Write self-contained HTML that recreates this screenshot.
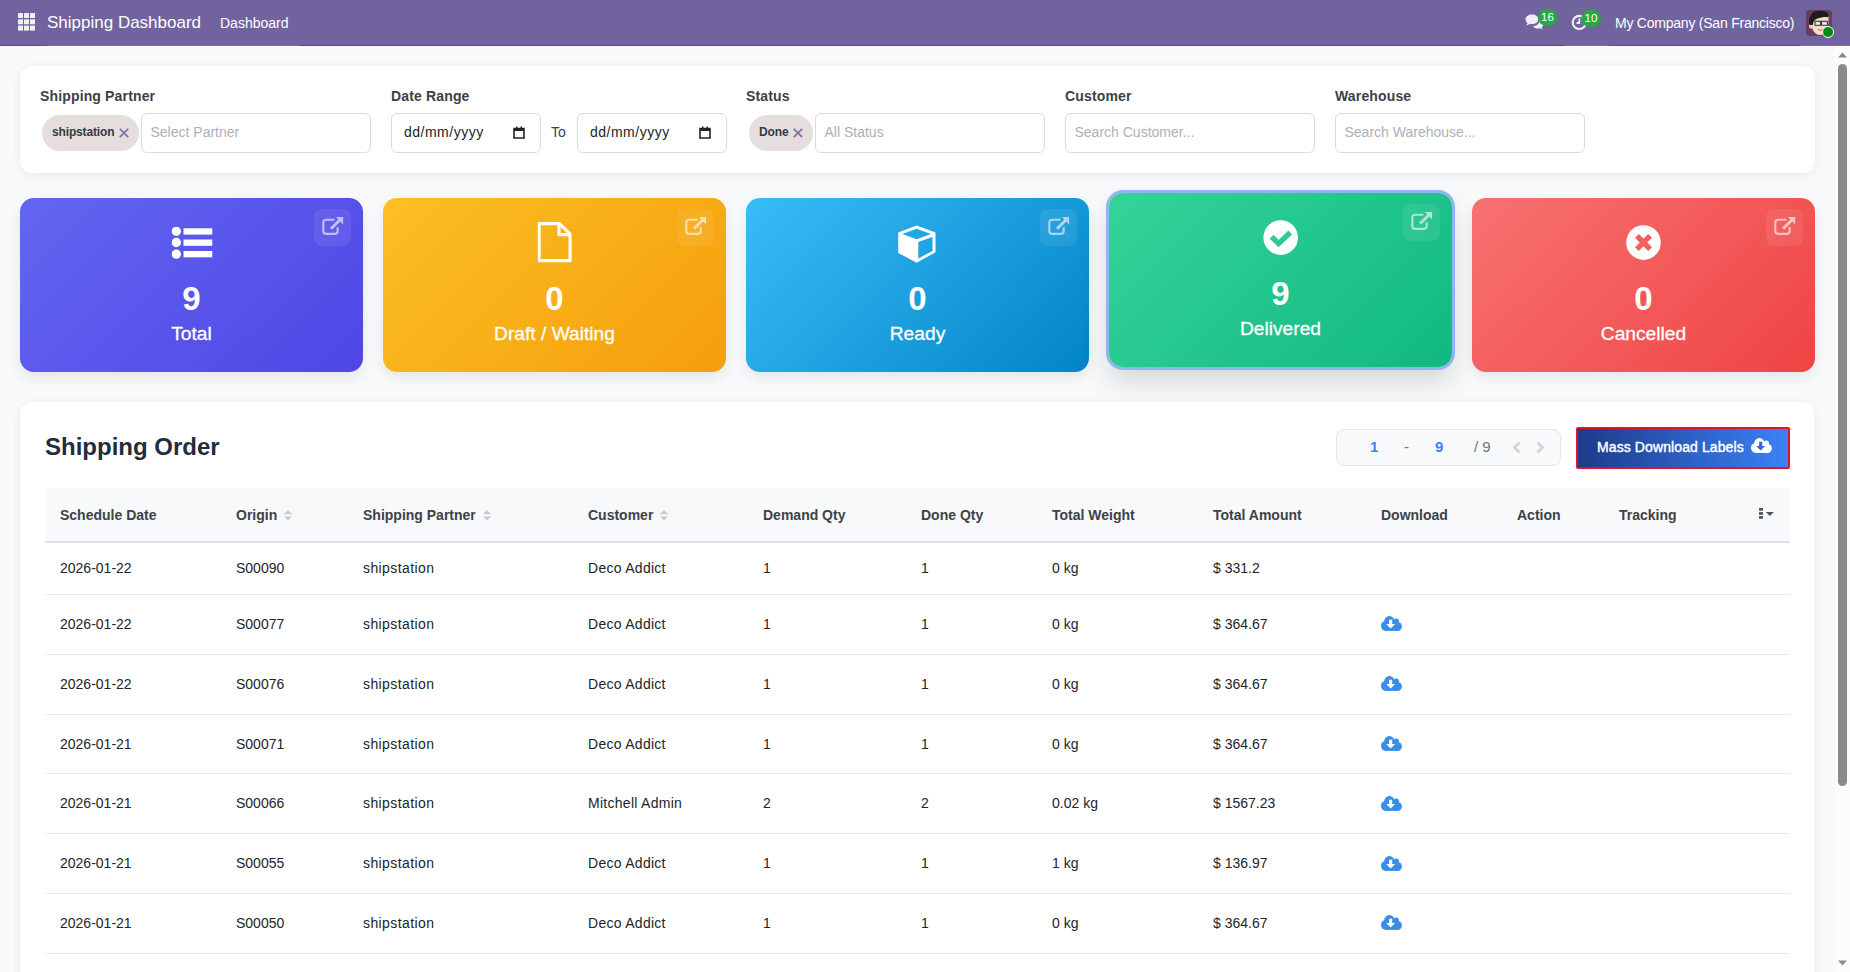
<!DOCTYPE html>
<html><head><meta charset="utf-8">
<style>
*{box-sizing:border-box;margin:0;padding:0}
html,body{width:1850px;height:972px;overflow:hidden;font-family:"Liberation Sans",sans-serif;background:#f8f9fa;color:#212529}
.nav{position:absolute;left:0;top:0;width:1850px;height:46px;background:#71639e;border-bottom:1px solid #5b4f82;color:#fff}
.nav .apps{position:absolute;left:18px;top:14px;width:17px;height:17px}
.nav .brand{position:absolute;left:47px;top:13px;font-size:17px;color:#fff;white-space:nowrap}
.nav .menu{position:absolute;left:220px;top:15px;font-size:14px;color:#fff;white-space:nowrap}
.nav .company{position:absolute;left:1615px;top:15px;font-size:14px;letter-spacing:-0.23px;color:#fff;white-space:nowrap}
.content{position:absolute;left:0;top:46px;width:1850px;height:926px;overflow:hidden;background:#f8f9fa}
.inner{position:relative;height:1150px}
.card{position:absolute;background:#fff;border-radius:12px;box-shadow:0 2px 10px rgba(0,0,0,0.07)}
.flabel{position:absolute;font-size:14px;font-weight:bold;color:#3b3f46;letter-spacing:0.15px;white-space:nowrap}
.inp{position:absolute;height:40px;border:1px solid #d6dce3;border-radius:6px;background:#fff;font-size:14px;color:#aab1ba;padding:0 9px 0 8.5px;line-height:37px;white-space:nowrap}
.pill{position:absolute;height:36px;border-radius:18px;background:#e5dedd;font-size:12px;font-weight:bold;color:#343a40;line-height:36px;padding-left:10px;white-space:nowrap}
.stat{position:absolute;top:152px;width:343px;height:174px;border-radius:14px;color:#fff;text-align:center;box-shadow:0 6px 14px rgba(0,0,0,0.08)}
.stat .num{position:absolute;left:0;right:0;top:81.5px;font-size:33px;font-weight:bold;line-height:38px}
.stat .lbl{position:absolute;left:0;right:0;top:123.5px;font-size:19.2px;line-height:24px;-webkit-text-stroke:0.3px #fff}
.stat .ext{position:absolute;right:12px;top:11px;width:37px;height:37px;border-radius:8px;background:rgba(255,255,255,0.08)}
.stat .ico{position:absolute;left:50%;top:24px;transform:translateX(-50%)}
table{position:absolute;left:45px;top:442px;width:1745px;border-collapse:collapse;font-size:14px}
th{background:#f8f9fa;height:54px;text-align:left;font-weight:bold;color:#3d4248;border-bottom:2px solid #dee2e6;padding:0 0 0 15px;white-space:nowrap}
td{height:59.8px;padding:0 0 0 15px;border-bottom:1px solid #e9ecef;color:#212529;white-space:nowrap}
.title{position:absolute;left:45px;top:387px;font-size:24px;font-weight:bold;color:#1f2d3d;white-space:nowrap}
.pager{position:absolute;left:1336px;top:383px;width:225px;height:37px;background:#f8f9fa;border:1px solid #e5e7eb;border-radius:8px;font-size:15px;color:#6c757d}
.pager span{position:absolute;top:8px;white-space:nowrap}
.pager .b{color:#3b82f6;font-weight:bold}
.mdl{position:absolute;left:1576px;top:381px;width:214px;height:42px;border:2px solid #e3122c;background:linear-gradient(90deg,#1e3a8a,#3b82f6);border-radius:2px;color:#fff;font-size:14px;font-weight:normal;-webkit-text-stroke:0.4px #fff;letter-spacing:0.1px;padding-left:19px;line-height:37px;white-space:nowrap}
.sort{vertical-align:-1px;margin-left:4px;position:relative;left:-1px}
td:nth-child(3){letter-spacing:0.4px}
td:nth-child(4){letter-spacing:0.28px}
td.dl svg{vertical-align:middle;position:relative;top:-1px}
tr.short td{height:52.4px}
tbody tr:not(.short) td{height:59.85px;padding-bottom:1px}
th.opt{padding-left:14px}
th.opt svg{vertical-align:middle;position:relative;top:-2px}
.inp.date{color:#212529;padding-left:12px;letter-spacing:0.5px;line-height:36px}
.inp.date .cal{position:absolute;right:15px;top:12px}
.pill .t{letter-spacing:-0.15px;position:relative;top:-1px}
.pill .x{position:absolute;right:10px;top:12.5px}
.sb{position:absolute;left:1835px;top:46px;width:15px;height:926px;background:#fcfcfc}
.sb .thumb{position:absolute;left:3px;top:18px;width:9px;height:722px;border-radius:5px;background:#8a8a8a}
.nav .ic{position:absolute}
.badge{position:absolute;height:17px;min-width:19px;border-radius:9px;background:#28a745;color:#fff;font-size:11.5px;font-weight:normal;line-height:17px;text-align:center;padding:0 3px}
</style></head><body>
<div class="nav">
  <div style="position:absolute;left:47px;top:45px;width:252px;height:1px;background:#7a6ca6"></div>
  <div style="position:absolute;left:1565px;top:45px;width:44px;height:1px;background:#7a6ca6"></div>
  <div style="position:absolute;left:1800px;top:45px;width:50px;height:1px;background:#7a6ca6"></div>
  <div class="brand">Shipping Dashboard</div>
  <div class="menu">Dashboard</div>
  <div class="company">My Company (San Francisco)</div>
  <svg class="ic" style="left:18px;top:13px" width="17" height="18" viewBox="0 0 17 18"><g fill="#f1eff6"><rect x="0" y="0" width="5" height="5"/><rect x="6" y="0" width="5" height="5"/><rect x="12" y="0" width="5" height="5"/><rect x="0" y="6.3" width="5" height="5"/><rect x="6" y="6.3" width="5" height="5"/><rect x="12" y="6.3" width="5" height="5"/><rect x="0" y="12.6" width="5" height="5"/><rect x="6" y="12.6" width="5" height="5"/><rect x="12" y="12.6" width="5" height="5"/></g></svg>
  <svg class="ic" style="left:1525px;top:14px" width="19" height="16" viewBox="0 0 19 16"><path fill="#f1eff6" d="M7,0.5 C10.6,0.5 13.3,2.6 13.3,5.3 C13.3,8 10.6,10.1 7,10.1 C6.3,10.1 5.6,10 5,9.9 L1.3,11.6 L2.5,9 C1.2,8.1 0.5,6.8 0.5,5.3 C0.5,2.6 3.4,0.5 7,0.5 Z M14.5,6.2 C16.8,6.9 18.3,8.5 18.3,10.4 C18.3,11.6 17.7,12.6 16.7,13.4 L17.7,15.6 L14.6,14.3 C14.1,14.4 13.6,14.5 13,14.5 C10.8,14.5 9,13.6 8.1,12.2 C11.6,12 14.5,9.6 14.5,6.5 Z"/></svg>
  <div class="badge" style="left:1538px;top:9px">16</div>
  <svg class="ic" style="left:1571px;top:14px" width="17" height="17" viewBox="0 0 17 17"><circle cx="8.3" cy="8.4" r="6.6" fill="none" stroke="#f1eff6" stroke-width="2.2"/><path d="M8.3,4.5 V9 H5.5" fill="none" stroke="#f1eff6" stroke-width="1.8"/></svg>
  <div class="badge" style="left:1581px;top:10px;min-width:20px">10</div>
  <div class="avatar" style="position:absolute;left:1806px;top:10px;width:26px;height:26px;border-radius:4px;background:#6a3b5c;overflow:hidden">
    <svg width="26" height="26" viewBox="0 0 26 26"><rect width="26" height="26" fill="#6a3d5e"/><path d="M5,10 C5,19 8.5,25 14,25 C19.5,25 22.5,19 22.5,11 L22.5,7 L6,7 Z" fill="#f6dbc6"/><ellipse cx="5" cy="16" rx="1.9" ry="2.8" fill="#efcdb4"/><path d="M3.3,15 C2.3,6 6,1.2 12,0.8 C17.5,0.4 21.5,1.6 22.5,4.2 L21.8,7.2 C18,6.8 14.5,7.6 11.5,8.6 C8.5,9.6 7.2,11.5 6.8,15 Z" fill="#1d1d1d"/><rect x="9" y="11.3" width="5.6" height="4" fill="#e6e6e6" stroke="#2e2e2e" stroke-width="1"/><rect x="15.6" y="11.3" width="5.8" height="4" fill="#e6e6e6" stroke="#2e2e2e" stroke-width="1"/><path d="M12,19.5 Q14.5,21 17,19.5" fill="none" stroke="#9b6b6b" stroke-width="0.9"/></svg>
  </div>
  <div style="position:absolute;left:1822px;top:26px;width:12px;height:12px;border-radius:50%;background:#008b14;border:1px solid #fff"></div>
</div>
<div class="content"><div class="inner">
  <div class="card" style="left:20px;top:20px;width:1795px;height:107px"></div>
  <div class="flabel" style="left:40px;top:42px">Shipping Partner</div>
  <div class="flabel" style="left:391px;top:42px">Date Range</div>
  <div class="flabel" style="left:746px;top:42px">Status</div>
  <div class="flabel" style="left:1065px;top:42px">Customer</div>
  <div class="flabel" style="left:1335px;top:42px">Warehouse</div>
  <div class="pill" style="left:42px;top:69px;width:97px"><span class="t">shipstation</span><svg class="x" width="10" height="10" viewBox="0 0 10 10"><path d="M0.8,0.8 L9.2,9.2 M9.2,0.8 L0.8,9.2" stroke="#7f70a9" stroke-width="1.7"/></svg></div>
  <div class="inp" style="left:141px;top:67px;width:230px">Select Partner</div>
  <div class="inp date" style="left:391px;top:67px;width:150px">dd/mm/yyyy<svg class="cal" width="12" height="13" viewBox="0 0 12 13"><path d="M1,2.5 H11 V12 H1 Z" fill="none" stroke="#212529" stroke-width="1.6"/><rect x="1" y="2" width="10" height="3" fill="#212529"/><rect x="3" y="0.5" width="1.5" height="2" fill="#212529"/><rect x="7.5" y="0.5" width="1.5" height="2" fill="#212529"/></svg></div>
  <div class="to" style="position:absolute;left:551px;top:78px;font-size:14px;color:#374151">To</div>
  <div class="inp date" style="left:577px;top:67px;width:150px">dd/mm/yyyy<svg class="cal" width="12" height="13" viewBox="0 0 12 13"><path d="M1,2.5 H11 V12 H1 Z" fill="none" stroke="#212529" stroke-width="1.6"/><rect x="1" y="2" width="10" height="3" fill="#212529"/><rect x="3" y="0.5" width="1.5" height="2" fill="#212529"/><rect x="7.5" y="0.5" width="1.5" height="2" fill="#212529"/></svg></div>
  <div class="pill" style="left:749px;top:69px;width:64px"><span class="t">Done</span><svg class="x" width="10" height="10" viewBox="0 0 10 10"><path d="M0.8,0.8 L9.2,9.2 M9.2,0.8 L0.8,9.2" stroke="#7f70a9" stroke-width="1.7"/></svg></div>
  <div class="inp" style="left:815px;top:67px;width:230px">All Status</div>
  <div class="inp" style="left:1065px;top:67px;width:250px">Search Customer...</div>
  <div class="inp" style="left:1335px;top:67px;width:250px">Search Warehouse...</div>
  <div class="stat" style="left:20px;top:152px;background:linear-gradient(135deg,#6366f1,#4f46e5);"><svg class="ico" style="top:29px" width="41" height="32" viewBox="0 0 41 32"><circle cx="4.8" cy="4.3" r="4.7" fill="#fff"/><circle cx="4.8" cy="15.5" r="4.7" fill="#fff"/><circle cx="4.8" cy="27.1" r="4.7" fill="#fff"/><rect x="12" y="1.3" width="29" height="6.3" fill="#fff"/><rect x="12" y="12.5" width="29" height="6.3" fill="#fff"/><rect x="12" y="24" width="29" height="6.3" fill="#fff"/></svg><div class="num">9</div><div class="lbl">Total</div><div class="ext"><svg width="37" height="37" viewBox="0 0 37 37"><path d="M20.5,10.7 H12.1 Q9.3,10.7 9.3,13.5 V22.1 Q9.3,24.9 12.1,24.9 H20.9 Q23.7,24.9 23.7,22.1 V18.2" fill="none" stroke="rgba(255,255,255,0.6)" stroke-width="2.1"/><path d="M22,8 H29.1 V15.4 Z" fill="rgba(255,255,255,0.6)"/><path d="M17,19.8 L25.6,11.3" stroke="rgba(255,255,255,0.6)" stroke-width="3"/></svg></div></div>
  <div class="stat" style="left:383px;top:152px;background:linear-gradient(135deg,#fbbf24,#f59e0b);"><svg class="ico" style="top:24px" width="35" height="41" viewBox="0 0 35 41"><path d="M1.6,1.6 H22 L32.6,12.2 V38.6 H1.6 Z" fill="none" stroke="#fff" stroke-width="3.1" stroke-linejoin="round"/><path d="M21.5,1.6 V12.6 H32.6" fill="none" stroke="#fff" stroke-width="3.1" stroke-linejoin="round"/></svg><div class="num">0</div><div class="lbl">Draft / Waiting</div><div class="ext"><svg width="37" height="37" viewBox="0 0 37 37"><path d="M20.5,10.7 H12.1 Q9.3,10.7 9.3,13.5 V22.1 Q9.3,24.9 12.1,24.9 H20.9 Q23.7,24.9 23.7,22.1 V18.2" fill="none" stroke="rgba(255,255,255,0.6)" stroke-width="2.1"/><path d="M22,8 H29.1 V15.4 Z" fill="rgba(255,255,255,0.6)"/><path d="M17,19.8 L25.6,11.3" stroke="rgba(255,255,255,0.6)" stroke-width="3"/></svg></div></div>
  <div class="stat" style="left:746px;top:152px;background:linear-gradient(135deg,#38bdf8,#0284c7);"><svg class="ico" style="top:27px;margin-left:-0.8px" width="39" height="39" viewBox="0 0 39 39"><path fill="#fff" fill-rule="evenodd" d="M19.2,0.4 L38,7.5 L38,27.3 L19.2,37.8 L0.7,27.9 L0.7,7.5 Z M19.2,3.8 L4.7,9 L19.2,14.3 L33.4,9 Z M20.8,17.1 L35,12.1 L35,26 L20.8,33.4 Z"/></svg><div class="num">0</div><div class="lbl">Ready</div><div class="ext"><svg width="37" height="37" viewBox="0 0 37 37"><path d="M20.5,10.7 H12.1 Q9.3,10.7 9.3,13.5 V22.1 Q9.3,24.9 12.1,24.9 H20.9 Q23.7,24.9 23.7,22.1 V18.2" fill="none" stroke="rgba(255,255,255,0.6)" stroke-width="2.1"/><path d="M22,8 H29.1 V15.4 Z" fill="rgba(255,255,255,0.6)"/><path d="M17,19.8 L25.6,11.3" stroke="rgba(255,255,255,0.6)" stroke-width="3"/></svg></div></div>
  <div class="stat" style="left:1109px;top:147px;background:linear-gradient(135deg,#34d399,#10b981);box-shadow:0 0 0 3px #93b4f3,0 14px 28px rgba(0,0,0,0.15)"><svg class="ico" style="top:27px" width="36" height="36" viewBox="0 0 36 36"><circle cx="17.7" cy="17.6" r="17.3" fill="#fff"/><path d="M8.6,16.8 L15.6,23.6 L27.2,12.5" fill="none" stroke="#2ecc8f" stroke-width="5.4" stroke-linejoin="miter"/></svg><div class="num">9</div><div class="lbl">Delivered</div><div class="ext"><svg width="37" height="37" viewBox="0 0 37 37"><path d="M20.5,10.7 H12.1 Q9.3,10.7 9.3,13.5 V22.1 Q9.3,24.9 12.1,24.9 H20.9 Q23.7,24.9 23.7,22.1 V18.2" fill="none" stroke="rgba(255,255,255,0.6)" stroke-width="2.1"/><path d="M22,8 H29.1 V15.4 Z" fill="rgba(255,255,255,0.6)"/><path d="M17,19.8 L25.6,11.3" stroke="rgba(255,255,255,0.6)" stroke-width="3"/></svg></div></div>
  <div class="stat" style="left:1472px;top:152px;background:linear-gradient(135deg,#f87171,#ef4444);"><svg class="ico" style="top:27px" width="36" height="36" viewBox="0 0 36 36"><circle cx="17.5" cy="17.6" r="17.3" fill="#fff"/><path d="M10.9,10.9 L24.1,24.1 M24.1,10.9 L10.9,24.1" fill="none" stroke="#f3605f" stroke-width="5.4"/></svg><div class="num">0</div><div class="lbl">Cancelled</div><div class="ext"><svg width="37" height="37" viewBox="0 0 37 37"><path d="M20.5,10.7 H12.1 Q9.3,10.7 9.3,13.5 V22.1 Q9.3,24.9 12.1,24.9 H20.9 Q23.7,24.9 23.7,22.1 V18.2" fill="none" stroke="rgba(255,255,255,0.6)" stroke-width="2.1"/><path d="M22,8 H29.1 V15.4 Z" fill="rgba(255,255,255,0.6)"/><path d="M17,19.8 L25.6,11.3" stroke="rgba(255,255,255,0.6)" stroke-width="3"/></svg></div></div>
  <div class="card" style="left:20px;top:356px;width:1794px;height:800px"></div>
  <div class="title">Shipping Order</div>
  <div class="pager"><span class="b" style="left:33px">1</span><span style="left:67px">-</span><span class="b" style="left:98px">9</span><span style="left:137px">/ 9</span>
    <svg style="position:absolute;left:175px;top:11px" width="10" height="13" viewBox="0 0 10 13"><path d="M7.5,1.5 L2.5,6.5 L7.5,11.5" fill="none" stroke="#ced2d6" stroke-width="2.6"/></svg>
    <svg style="position:absolute;left:198px;top:11px" width="10" height="13" viewBox="0 0 10 13"><path d="M2.5,1.5 L7.5,6.5 L2.5,11.5" fill="none" stroke="#ced2d6" stroke-width="2.6"/></svg>
  </div>
  <div class="mdl">Mass Download Labels<svg style="position:absolute;left:173px;top:9px" width="21" height="15" viewBox="0 0 21 15"><g fill="#fff"><circle cx="5" cy="9.9" r="5"/><circle cx="8.4" cy="5.4" r="5.3"/><circle cx="15.3" cy="5.2" r="2.6"/><circle cx="16.4" cy="10.5" r="4.5"/><rect x="5" y="7" width="11.5" height="7.9"/></g><path fill="#3567cf" d="M8.1,3.7 H11.2 V8.1 H14.1 L9.65,12.5 L5.2,8.1 H8.1 Z"/></svg></div>
  <table>
   <colgroup><col style="width:176px"><col style="width:127px"><col style="width:225px"><col style="width:175px"><col style="width:158px"><col style="width:131px"><col style="width:161px"><col style="width:168px"><col style="width:136px"><col style="width:102px"><col style="width:141px"><col></colgroup>
   <thead><tr><th>Schedule Date</th><th>Origin <svg class="sort" width="8" height="11" viewBox="0 0 8 11"><path d="M0,4.2 L4,0 L8,4.2 Z M0,6.4 L8,6.4 L4,10.6 Z" fill="#c6cacf"/></svg></th><th>Shipping Partner <svg class="sort" width="8" height="11" viewBox="0 0 8 11"><path d="M0,4.2 L4,0 L8,4.2 Z M0,6.4 L8,6.4 L4,10.6 Z" fill="#c6cacf"/></svg></th><th>Customer <svg class="sort" width="8" height="11" viewBox="0 0 8 11"><path d="M0,4.2 L4,0 L8,4.2 Z M0,6.4 L8,6.4 L4,10.6 Z" fill="#c6cacf"/></svg></th><th>Demand Qty</th><th>Done Qty</th><th>Total Weight</th><th>Total Amount</th><th>Download</th><th>Action</th><th>Tracking</th><th class="opt"><svg width="15" height="12" viewBox="0 0 15 12"><g fill="#4c545c"><rect x="0" y="0" width="4" height="2.7"/><rect x="0" y="4.1" width="4" height="2.7"/><rect x="0" y="8.1" width="4" height="2.7"/><path d="M6.9,4 H14.9 L10.9,8.1 Z"/></g></svg></th></tr></thead>
   <tbody>
<tr class="short"><td>2026-01-22</td><td>S00090</td><td>shipstation</td><td>Deco Addict</td><td>1</td><td>1</td><td>0 kg</td><td>$ 331.2</td><td class="dl"></td><td></td><td></td><td></td></tr>
<tr><td>2026-01-22</td><td>S00077</td><td>shipstation</td><td>Deco Addict</td><td>1</td><td>1</td><td>0 kg</td><td>$ 364.67</td><td class="dl"><svg width="21" height="15" viewBox="0 0 21 15"><g fill="#3a8ee6"><circle cx="5" cy="9.9" r="5"/><circle cx="8.4" cy="5.4" r="5.3"/><circle cx="15.3" cy="5.2" r="2.6"/><circle cx="16.4" cy="10.5" r="4.5"/><rect x="5" y="7" width="11.5" height="7.9"/></g><path fill="#fff" d="M8.1,3.7 H11.2 V8.1 H14.1 L9.65,12.5 L5.2,8.1 H8.1 Z"/></svg></td><td></td><td></td><td></td></tr>
<tr><td>2026-01-22</td><td>S00076</td><td>shipstation</td><td>Deco Addict</td><td>1</td><td>1</td><td>0 kg</td><td>$ 364.67</td><td class="dl"><svg width="21" height="15" viewBox="0 0 21 15"><g fill="#3a8ee6"><circle cx="5" cy="9.9" r="5"/><circle cx="8.4" cy="5.4" r="5.3"/><circle cx="15.3" cy="5.2" r="2.6"/><circle cx="16.4" cy="10.5" r="4.5"/><rect x="5" y="7" width="11.5" height="7.9"/></g><path fill="#fff" d="M8.1,3.7 H11.2 V8.1 H14.1 L9.65,12.5 L5.2,8.1 H8.1 Z"/></svg></td><td></td><td></td><td></td></tr>
<tr><td>2026-01-21</td><td>S00071</td><td>shipstation</td><td>Deco Addict</td><td>1</td><td>1</td><td>0 kg</td><td>$ 364.67</td><td class="dl"><svg width="21" height="15" viewBox="0 0 21 15"><g fill="#3a8ee6"><circle cx="5" cy="9.9" r="5"/><circle cx="8.4" cy="5.4" r="5.3"/><circle cx="15.3" cy="5.2" r="2.6"/><circle cx="16.4" cy="10.5" r="4.5"/><rect x="5" y="7" width="11.5" height="7.9"/></g><path fill="#fff" d="M8.1,3.7 H11.2 V8.1 H14.1 L9.65,12.5 L5.2,8.1 H8.1 Z"/></svg></td><td></td><td></td><td></td></tr>
<tr><td>2026-01-21</td><td>S00066</td><td>shipstation</td><td>Mitchell Admin</td><td>2</td><td>2</td><td>0.02 kg</td><td>$ 1567.23</td><td class="dl"><svg width="21" height="15" viewBox="0 0 21 15"><g fill="#3a8ee6"><circle cx="5" cy="9.9" r="5"/><circle cx="8.4" cy="5.4" r="5.3"/><circle cx="15.3" cy="5.2" r="2.6"/><circle cx="16.4" cy="10.5" r="4.5"/><rect x="5" y="7" width="11.5" height="7.9"/></g><path fill="#fff" d="M8.1,3.7 H11.2 V8.1 H14.1 L9.65,12.5 L5.2,8.1 H8.1 Z"/></svg></td><td></td><td></td><td></td></tr>
<tr><td>2026-01-21</td><td>S00055</td><td>shipstation</td><td>Deco Addict</td><td>1</td><td>1</td><td>1 kg</td><td>$ 136.97</td><td class="dl"><svg width="21" height="15" viewBox="0 0 21 15"><g fill="#3a8ee6"><circle cx="5" cy="9.9" r="5"/><circle cx="8.4" cy="5.4" r="5.3"/><circle cx="15.3" cy="5.2" r="2.6"/><circle cx="16.4" cy="10.5" r="4.5"/><rect x="5" y="7" width="11.5" height="7.9"/></g><path fill="#fff" d="M8.1,3.7 H11.2 V8.1 H14.1 L9.65,12.5 L5.2,8.1 H8.1 Z"/></svg></td><td></td><td></td><td></td></tr>
<tr><td>2026-01-21</td><td>S00050</td><td>shipstation</td><td>Deco Addict</td><td>1</td><td>1</td><td>0 kg</td><td>$ 364.67</td><td class="dl"><svg width="21" height="15" viewBox="0 0 21 15"><g fill="#3a8ee6"><circle cx="5" cy="9.9" r="5"/><circle cx="8.4" cy="5.4" r="5.3"/><circle cx="15.3" cy="5.2" r="2.6"/><circle cx="16.4" cy="10.5" r="4.5"/><rect x="5" y="7" width="11.5" height="7.9"/></g><path fill="#fff" d="M8.1,3.7 H11.2 V8.1 H14.1 L9.65,12.5 L5.2,8.1 H8.1 Z"/></svg></td><td></td><td></td><td></td></tr>
<tr><td>2026-01-20</td><td>S00045</td><td>shipstation</td><td>Deco Addict</td><td>1</td><td>1</td><td>0 kg</td><td>$ 364.67</td><td class="dl"><svg width="21" height="15" viewBox="0 0 21 15"><g fill="#3a8ee6"><circle cx="5" cy="9.9" r="5"/><circle cx="8.4" cy="5.4" r="5.3"/><circle cx="15.3" cy="5.2" r="2.6"/><circle cx="16.4" cy="10.5" r="4.5"/><rect x="5" y="7" width="11.5" height="7.9"/></g><path fill="#fff" d="M8.1,3.7 H11.2 V8.1 H14.1 L9.65,12.5 L5.2,8.1 H8.1 Z"/></svg></td><td></td><td></td><td></td></tr>
<tr><td>2026-01-20</td><td>S00040</td><td>shipstation</td><td>Deco Addict</td><td>1</td><td>1</td><td>0 kg</td><td>$ 364.67</td><td class="dl"><svg width="21" height="15" viewBox="0 0 21 15"><g fill="#3a8ee6"><circle cx="5" cy="9.9" r="5"/><circle cx="8.4" cy="5.4" r="5.3"/><circle cx="15.3" cy="5.2" r="2.6"/><circle cx="16.4" cy="10.5" r="4.5"/><rect x="5" y="7" width="11.5" height="7.9"/></g><path fill="#fff" d="M8.1,3.7 H11.2 V8.1 H14.1 L9.65,12.5 L5.2,8.1 H8.1 Z"/></svg></td><td></td><td></td><td></td></tr>
   </tbody>
  </table>
</div></div>
<div class="sb"><svg style="position:absolute;left:3px;top:6px" width="9" height="6" viewBox="0 0 9 6"><path d="M0,5.5 L4.5,0.5 L9,5.5 Z" fill="#8a8a8a"/></svg><div class="thumb"></div><svg style="position:absolute;left:3px;top:913.5px" width="9" height="6" viewBox="0 0 9 6"><path d="M0,0.5 L4.5,5.5 L9,0.5 Z" fill="#8a8a8a"/></svg></div>
</body></html>
